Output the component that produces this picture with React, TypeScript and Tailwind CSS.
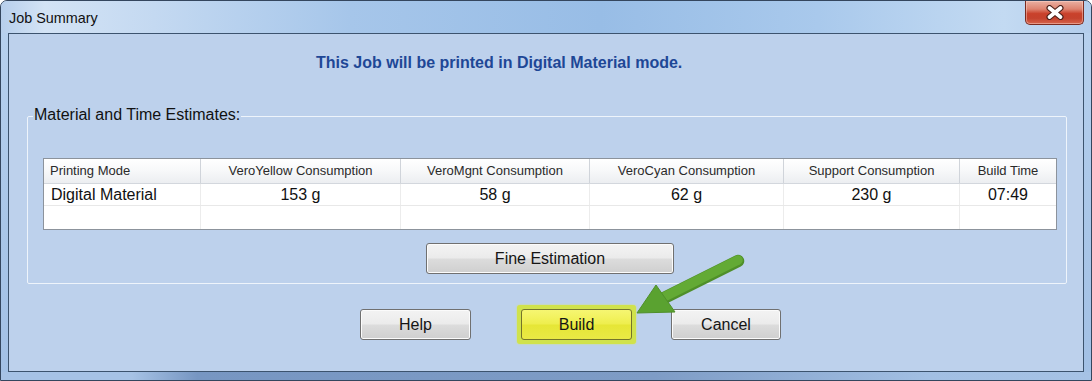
import React from "react";

const cols = [
  { h: "Printing Mode", v: "Digital Material", w: "w-[156px]", left: true },
  { h: "VeroYellow Consumption", v: "153 g", w: "w-[200px]" },
  { h: "VeroMgnt Consumption", v: "58 g", w: "w-[189px]" },
  { h: "VeroCyan Consumption", v: "62 g", w: "w-[194px]" },
  { h: "Support Consumption", v: "230 g", w: "w-[176px]" },
  { h: "Build Time", v: "07:49", w: "flex-1" },
];

function WinButton({ children, className = "" }: { children: React.ReactNode; className?: string }) {
  return (
    <div
      className={
        "h-[31px] flex items-center justify-center rounded-[3px] border border-[#707070] text-[16px] text-[#151515] shadow-[inset_0_0_0_1px_#fbfbfb] bg-[linear-gradient(to_bottom,#f3f3f3_0%,#ebebeb_48%,#dcdcdc_52%,#cfcfcf_100%)] " +
        className
      }
    >
      {children}
    </div>
  );
}

export default function App() {
  return (
    <div className="relative w-[1092px] h-[381px] overflow-hidden flex flex-col rounded-t-[7px] border border-[#34465e] bg-[linear-gradient(to_bottom,#b9d2ef_0%,#a9c6e8_60%,#a2c0e5_100%)] font-['Liberation_Sans',Arial,sans-serif]">
      {/* title bar */}
      <div className="h-[32px] flex items-start bg-[linear-gradient(90deg,#b7cfec_0%,#d3e3f5_4%,#c4d9f1_14%,#a6c6ea_32%,#98bde6_55%,#a9c9ec_75%,#c3daf2_92%,#b3cdec_100%)]">
        <div className="pl-[8px] pt-[9px] text-[14.4px] leading-[16px] text-[#111]">Job Summary</div>
        <div className="ml-auto mr-[7px] w-[59px] h-[24px] rounded-b-[5px] border border-t-0 border-[#7b2b20] flex items-center justify-center bg-[linear-gradient(to_bottom,#eab0a2_0%,#de8370_35%,#c9412b_55%,#c5422d_75%,#d6644c_100%)] shadow-[inset_0_0_0_1px_rgba(255,220,210,0.45)]">
          <svg width="18" height="15" viewBox="0 0 18 15">
            <path d="M3.5 3 L14.5 12 M14.5 3 L3.5 12" stroke="#4a1f18" strokeWidth="6" strokeLinecap="round" />
            <path d="M3.5 3 L14.5 12 M14.5 3 L3.5 12" stroke="#ffffff" strokeWidth="3.8" strokeLinecap="round" />
          </svg>
        </div>
      </div>

      {/* client area */}
      <div className="mx-[7px] h-[339px] border border-[#3c536e] bg-[#bdd1ec] flex flex-col">
        <div className="mt-[20px] ml-[307px] text-[16px] leading-[18px] font-bold text-[#1e4796]">
          This Job will be printed in Digital Material mode.
        </div>

        <fieldset className="mt-[33px] ml-[18px] mr-[16px] border border-[#eef4fb] rounded-[2px] flex flex-col">
          <legend className="ml-[5px] px-[1px] pt-[1px] pb-[4px] text-[16px] leading-[18px] text-[#111]">
            Material and Time Estimates:
          </legend>

          <div className="mt-[30px] ml-[15px] mr-[9px] border border-[#8c939c] bg-white flex flex-col">
            <div className="h-[25px] flex border-b border-[#d3d7dd] bg-[linear-gradient(to_bottom,#ffffff_0%,#f7f8f9_50%,#eceef1_100%)]">
              {cols.map((c, i) => (
                <div
                  key={i}
                  className={
                    c.w +
                    " flex items-center text-[13px] text-[#2a2a2a] " +
                    (i > 0 ? "border-l border-[#d0d4da] justify-center" : "pl-[6px]")
                  }
                >
                  {c.h}
                </div>
              ))}
            </div>
            <div className="h-[22px] flex border-b border-[#e8e8e8]">
              {cols.map((c, i) => (
                <div
                  key={i}
                  className={
                    c.w +
                    " flex items-center text-[16px] text-[#111] " +
                    (i > 0 ? "border-l border-[#ececec] justify-center" : "pl-[7px]")
                  }
                >
                  {c.v}
                </div>
              ))}
            </div>
            <div className="h-[23px] flex">
              {cols.map((c, i) => (
                <div key={i} className={c.w + (i > 0 ? " border-l border-[#ececec]" : "")} />
              ))}
            </div>
          </div>

          <div className="mt-[13px] mb-[9px] ml-[15px] mr-[9px] flex justify-center">
            <WinButton className="w-[248px]">Fine Estimation</WinButton>
          </div>
        </fieldset>

        <div className="mt-[21px] flex items-center">
          <WinButton className="ml-[351px] w-[111px]">Help</WinButton>
          <div className="ml-[46px] p-[4px] rounded-[3px] bg-[#d0e24c] shadow-[0_0_2px_#d8e860]">
            <div className="w-[111px] h-[31px] flex items-center justify-center rounded-[3px] border border-[#74742a] text-[16px] text-[#151515] bg-[linear-gradient(to_bottom,#f6f672_0%,#eeee4e_48%,#e6e636_52%,#e9e945_100%)]">
              Build
            </div>
          </div>
          <WinButton className="ml-[35px] w-[110px] border-[#3c7fb1] shadow-[inset_0_0_0_1px_#a7e2f7,inset_0_0_0_2px_#d6f1fb]">
            Cancel
          </WinButton>
        </div>
      </div>

      {/* bottom frame */}
      <div className="flex-1 bg-[linear-gradient(90deg,#a6c2e5_0%,#a6c2e5_12%,#7796c2_18%,#7e9cc6_60%,#a2bfe3_85%,#a6c2e5_100%)]" />

      {/* green arrow overlay */}
      <svg className="absolute left-[-1px] top-[-1px] w-[1092px] h-[381px] pointer-events-none" viewBox="0 0 1092 381">
        <line x1="738" y1="261" x2="664" y2="298" stroke="#4f8f2a" strokeWidth="12.5" strokeLinecap="round" />
        <line x1="738" y1="260" x2="664" y2="297" stroke="#63aa35" strokeWidth="9.5" strokeLinecap="round" />
        <polygon points="656,285 675,312 637,313" fill="#5aa230" stroke="#4f8f2a" strokeWidth="1" strokeLinejoin="round" />
      </svg>
    </div>
  );
}
